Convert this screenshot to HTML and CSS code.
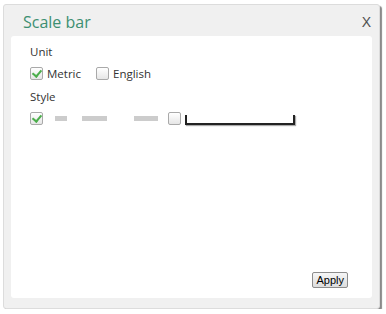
FILE: index.html
```html
<!doctype html>
<html>
    <head>
        <title>Scale bar</title>
        <meta charset="utf-8">
        <link rel="stylesheet" href="styles.css">
    </head>

    <body>
        <section class="panel">
            <header class="panel-head">
                <span class="title">Scale bar</span>
                <span class="close">X</span>
            </header>

            <div class="panel-body">
                <div class="label">Unit</div>
                <div class="row">
                    <label class="opt"><span class="box checked"></span>Metric</label>
                    <label class="opt"><span class="box"></span>English</label>
                </div>

                <div class="label">Style</div>
                <div class="row style-row">
                    <span class="box checked"></span>
                    <span class="dash d1"></span>
                    <span class="dash d2"></span>
                    <span class="dash d3"></span>
                    <span class="box"></span>
                    <span class="bar"></span>
                </div>

                <div class="foot">
                    <button class="apply">Apply</button>
                </div>
            </div>
        </section>
    </body>
</html>
```

FILE: styles.css
```css
body{
    margin: 0px;
    padding: 0px;
    background: #ffffff;
    font-family: "Open Sans", "Noto Sans", sans-serif;
}

.panel{
    margin: 4px 0 0 3px;
    width: 377px;
    height: 305px;
    box-sizing: border-box;
    background: #f0f0f0;
    border: 1px solid #dcdcdc;
    border-radius: 3px;
    box-shadow: 2px 2px 1px #8a8a8a;
    padding: 0 7px 10px 7px;
    display: flex;
    flex-direction: column;
}

.panel-head{
    height: 31px;
    display: flex;
    align-items: center;
    justify-content: space-between;
}

.title{
    margin-left: 12px;
    margin-top: 3px;
    font-size: 16px;
    color: #3d8f72;
}

.close{
    font-family: "Liberation Sans", Arial, sans-serif;
    font-size: 14px;
    color: #505050;
    margin-right: 1px;
    margin-top: 3px;
}

.panel-body{
    flex: 1;
    background: #ffffff;
    border-radius: 3px;
    padding: 7px 19px 0 19px;
    display: flex;
    flex-direction: column;
    font-size: 11.5px;
    color: #333333;
}

.label{
    height: 17px;
    line-height: 17px;
}

.row{
    display: flex;
    align-items: center;
    height: 22px;
    margin-top: 2px;
    margin-bottom: 4px;
}

.opt{
    display: flex;
    align-items: center;
    margin-right: 15px;
}

.box{
    width: 11px;
    height: 11px;
    border: 1px solid #a9a9a9;
    border-radius: 2px;
    background: linear-gradient(#ffffff, #e6e6e6);
    margin-right: 4px;
    position: relative;
}

.box.checked::after{
    content: "";
    position: absolute;
    left: 3px;
    top: 0px;
    width: 4px;
    height: 7px;
    border-right: 2px solid #4cae4c;
    border-bottom: 2px solid #4cae4c;
    transform: rotate(40deg);
}

.style-row{
    height: 20px;
    margin-top: 3px;
}

.dash{
    height: 5px;
    background: #cccccc;
}

.d1{
    width: 12px;
    margin-left: 8px;
}

.d2{
    width: 25px;
    margin-left: 15px;
}

.d3{
    width: 24px;
    margin-left: 27px;
    margin-right: 10px;
}

.bar{
    width: 106px;
    height: 8px;
    margin-left: 0px;
    margin-top: 3px;
    border: 2px solid #222222;
    border-top: none;
    box-shadow: 1px 1px 1px #aaaaaa;
}

.foot{
    margin-top: auto;
    display: flex;
    justify-content: flex-end;
    padding: 0 5px 10px 0;
}

.apply{
    font-family: "Liberation Sans", Arial, sans-serif;
    font-size: 11px;
    color: #000000;
    padding: 1px 3px;
    border: 1px solid #8c8c8c;
    border-radius: 2px;
    background: linear-gradient(#f6f6f6, #dddddd);
}
```
